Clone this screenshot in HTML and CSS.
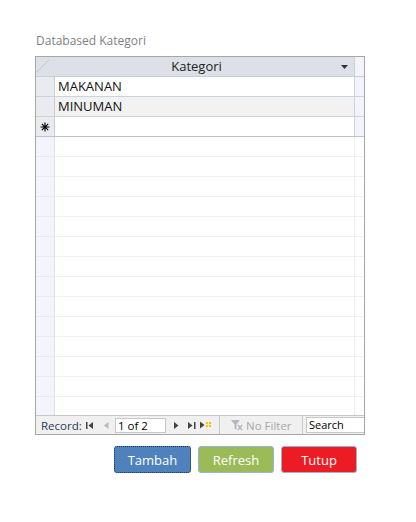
FILE: index.html
```html
<!DOCTYPE html>
<html>
<head>
<meta charset="utf-8">
<link rel="stylesheet" href="styles.css">
</head>
<body>
<div class="page">
  <div class="title">Databased Kategori</div>
  <div class="sheet">
    <div class="row head">
      <div class="sel corner"><svg width="18" height="19" viewBox="0 0 18 19"><path d="M1 15 L13 3" stroke="#c3c8cf" stroke-width="1" fill="none"/></svg></div>
      <div class="cell hcell"><span class="htext">Kategori</span><svg class="dd" width="7" height="4" viewBox="0 0 7 4"><path d="M0 0 H7 L3.5 4 Z" fill="#333"/></svg></div>
      <div class="rest"></div>
    </div>
    <div class="row data">
      <div class="sel"></div>
      <div class="cell">MAKANAN</div>
      <div class="rest"></div>
    </div>
    <div class="row data alt">
      <div class="sel"></div>
      <div class="cell">MINUMAN</div>
      <div class="rest"></div>
    </div>
    <div class="row data newrow">
      <div class="sel star"><svg width="10" height="10" viewBox="0 0 10 10"><path d="M5 0.5 V9.5 M0.5 5 H9.5 M1.8 1.8 L8.2 8.2 M8.2 1.8 L1.8 8.2" stroke="#000" stroke-width="1.1"/></svg></div>
      <div class="cell"></div>
      <div class="rest"></div>
    </div>
    <div class="filler">
      <div class="sel fsel"></div>
      <div class="cell fcell"></div>
      <div class="rest frest"></div>
    </div>
    <div class="status">
      <span class="rec">Record:</span>
      <span class="nav first"><svg width="8" height="7" viewBox="0 0 8 7"><rect x="0" y="0" width="1.5" height="7" fill="#444"/><path d="M7 0 V7 L2.5 3.5 Z" fill="#444"/></svg></span>
      <span class="nav prev"><svg width="5" height="7" viewBox="0 0 5 7"><path d="M4.5 0 V7 L0 3.5 Z" fill="#b8b8b8"/></svg></span>
      <span class="pos">1 of 2</span>
      <span class="nav next"><svg width="5" height="7" viewBox="0 0 5 7"><path d="M0 0 V7 L4.5 3.5 Z" fill="#444"/></svg></span>
      <span class="nav last"><svg width="8" height="7" viewBox="0 0 8 7"><path d="M0 0 V7 L4.5 3.5 Z" fill="#444"/><rect x="6" y="0" width="1.5" height="7" fill="#444"/></svg></span>
      <span class="nav new"><svg width="13" height="8" viewBox="0 0 13 8"><path d="M0 0.5 V7.5 L4.5 4 Z" fill="#444"/><g fill="#f2c200"><rect x="6" y="1" width="2" height="2"/><rect x="9" y="1" width="2" height="2"/><rect x="6" y="4" width="2" height="2"/><rect x="9" y="4" width="2" height="2"/><rect x="7.5" y="2.5" width="2" height="2" fill="#ffe680"/></g></svg></span>
      <span class="sep"></span>
      <span class="filter"><svg width="12" height="11" viewBox="0 0 12 11"><path d="M0 0 H9 L5.5 4.5 V10 L3.5 8.5 V4.5 Z" fill="#b4b8be"/><path d="M7 5 L11 10 M11 5 L7 10" stroke="#b4b8be" stroke-width="1.4"/></svg>No Filter</span>
      <span class="sep2"></span>
      <span class="search">Search</span>
    </div>
  </div>
  <div class="buttons">
    <button class="btn tambah">Tambah</button>
    <button class="btn refresh">Refresh</button>
    <button class="btn tutup">Tutup</button>
  </div>
</div>
</body>
</html>
```

FILE: styles.css
```css
* { box-sizing: border-box; }
body { margin: 0; background: #ffffff; font-family: "Open Sans", "DejaVu Sans", sans-serif; }
.page { padding: 33px 0 0 35px; }
.title { font-size: 12px; color: #7f7f7f; height: 23px; line-height: 16px; padding-left: 1px; }
.sheet { width: 330px; height: 379px; border: 1px solid #a6a6a6; display: flex; flex-direction: column; background: #fff; overflow: hidden; }
.row { display: flex; height: 20px; flex: 0 0 20px; }
.sel { width: 19px; flex: 0 0 19px; border-right: 1px solid #c9cdd3; }
.cell { width: 300px; flex: 0 0 300px; border-right: 1px solid #d5dae3; font-size: 13px; color: #111; line-height: 19px; padding-left: 3px; }
.rest { flex: 1; background: #f3f4fb; }
.head { background: #dde1e7; border-bottom: 1px solid #c9cfd8; }
.head .rest { background: #f3f4fb; }
.corner { background: #dde1e7; border-right: 1px solid #dde1e7; }
.corner svg { display: block; }
.hcell { position: relative; text-align: center; padding-left: 0; padding-right: 16px; color: #222; font-size: 13px; border-right: 1px solid #c9cfd8; }
.dd { position: absolute; right: 6px; top: 8px; }
.data { border-bottom: 1px solid #c9d3e0; }
.data .sel { background: #e9ebee; border-right: 1px solid #c9cdd3; }
.data.alt .cell { background: #f2f2f2; }
.data .cell { border-right: 1px solid #c9d3e0; }
.newrow { border-bottom: 1px solid #b8c3d4; }
.star { display: flex; align-items: center; justify-content: center; }
.star svg { display: block; }
.filler { flex: 1; display: flex; }
.fsel { background-color: #f4f5fc; background-image: repeating-linear-gradient(to bottom, transparent 0, transparent 19px, #e8eaf0 19px, #e8eaf0 20px); border-right: 1px solid #dfe2e8; }
.fcell { background-image: repeating-linear-gradient(to bottom, transparent 0, transparent 19px, #f0f1f5 19px, #f0f1f5 20px); border-right: 1px solid #eef0f5; }
.frest { background-color: #fff; background-image: repeating-linear-gradient(to bottom, transparent 0, transparent 19px, #f0f1f5 19px, #f0f1f5 20px); }
.status { flex: 0 0 19px; height: 19px; display: flex; align-items: center; background: #f0f0f0; border-top: 1px solid #c8c8c8; font-size: 11.5px; color: #1f3a5a; }
.rec { padding-left: 5px; width: 50px; }
.nav { display: flex; align-items: center; }
.first { margin-left: 0; width: 18px; }
.prev { width: 11px; }
.pos { width: 51px; height: 15px; background: #fff; border: 1px solid #c8c8c8; color: #000; font-size: 11.5px; line-height: 13px; padding-left: 2px; }
.next { margin-left: 8px; width: 14px; }
.last { width: 12px; }
.new { width: 18px; }
.sep { width: 1px; height: 19px; background: #c8c8c8; margin-left: 1px; }
.filter { display: flex; align-items: center; gap: 3px; color: #a8a8a8; font-size: 11.5px; padding-left: 11px; width: 82px; }
.sep2 { width: 1px; height: 19px; background: #c8c8c8; }
.search { margin-left: 3px; height: 16px; flex: 1; background: #fff; border: 1px solid #c8c8c8; border-right: none; color: #000; font-size: 11px; line-height: 14px; padding-left: 2px; }
.buttons { display: flex; gap: 7px; padding: 11px 0 0 79px; }
.btn { width: 77px; height: 27px; border-radius: 3px; color: #fff; font-family: "Open Sans", "DejaVu Sans", sans-serif; font-size: 13px; border: 1px solid #95b3d7; padding: 0; }
.tambah { background: #4f81bd; border: 1px dotted #1a2f4f; }
.refresh { background: #9bbb59; width: 76px; }
.tutup { background: #ed1c24; width: 76px; }
```
